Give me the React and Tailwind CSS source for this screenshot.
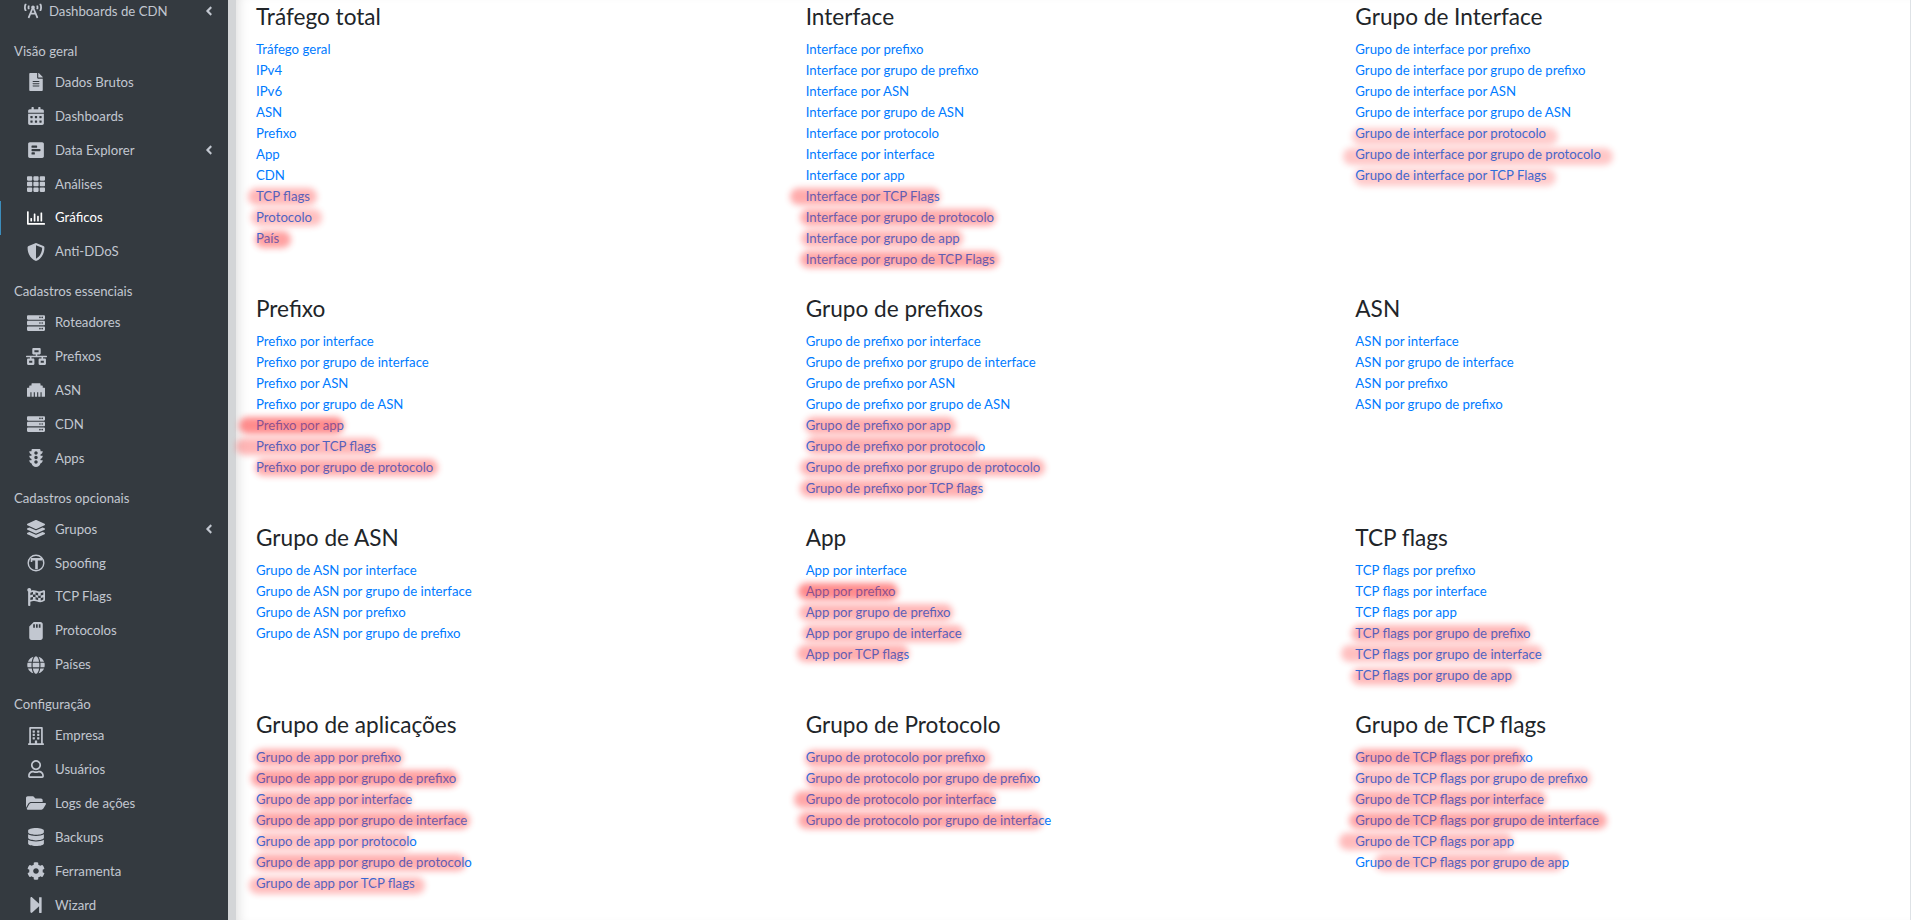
import {
  FaBroadcastTower, FaFileAlt, FaCalendarAlt, FaPollH, FaTh, FaRegChartBar, FaShieldAlt, FaServer,
  FaNetworkWired, FaEthernet, FaTrafficLight, FaLayerGroup, FaFlagCheckered, FaSdCard, FaGlobe,
  FaRegBuilding, FaRegUser, FaFolderOpen, FaDatabase, FaCog, FaStepForward, FaAngleLeft,
} from 'react-icons/fa';

function SpoofIcon({ size }) {
  return (
    <svg width={size} height={size} viewBox="0 0 18 18" fill="none" stroke="currentColor">
      <circle cx="9" cy="9" r="7.8" strokeWidth="1.4" />
      <path d="M4 5.2h11M9.5 5.2v10" strokeWidth="2.6" />
      <path d="M4.5 5v3" strokeWidth="1.6" />
    </svg>
  );
}

const menu = [
  { section: 'Visão geral', items: [
    { icon: FaFileAlt, label: 'Dados Brutos' },
    { icon: FaCalendarAlt, label: 'Dashboards' },
    { icon: FaPollH, label: 'Data Explorer', arrow: true },
    { icon: FaTh, label: 'Análises' },
    { icon: FaRegChartBar, label: 'Gráficos', active: true },
    { icon: FaShieldAlt, label: 'Anti-DDoS' },
  ] },
  { section: 'Cadastros essenciais', items: [
    { icon: FaServer, label: 'Roteadores' },
    { icon: FaNetworkWired, label: 'Prefixos', size: 21 },
    { icon: FaEthernet, label: 'ASN' },
    { icon: FaServer, label: 'CDN' },
    { icon: FaTrafficLight, label: 'Apps' },
  ] },
  { section: 'Cadastros opcionais', items: [
    { icon: FaLayerGroup, label: 'Grupos', arrow: true },
    { icon: SpoofIcon, label: 'Spoofing' },
    { icon: FaFlagCheckered, label: 'TCP Flags' },
    { icon: FaSdCard, label: 'Protocolos' },
    { icon: FaGlobe, label: 'Países' },
  ] },
  { section: 'Configuração', items: [
    { icon: FaRegBuilding, label: 'Empresa' },
    { icon: FaRegUser, label: 'Usuários' },
    { icon: FaFolderOpen, label: 'Logs de ações', size: 20 },
    { icon: FaDatabase, label: 'Backups' },
    { icon: FaCog, label: 'Ferramenta' },
    { icon: FaStepForward, label: 'Wizard' },
  ] },
];

// m: [overhang left, overhang right, opacity, y shift] of the red marker stroke
const groups = [
  { title: 'Tráfego total', links: [
    ['Tráfego geral'], ['IPv4'], ['IPv6'], ['ASN'], ['Prefixo'], ['App'], ['CDN'],
    ['TCP flags', [8, 7, 0.35, 0]], ['Protocolo', [5, 10, 0.3, 0]], ['País', [1, 12, 0.45, 1]],
  ] },
  { title: 'Interface', links: [
    ['Interface por prefixo'], ['Interface por grupo de prefixo'], ['Interface por ASN'], ['Interface por grupo de ASN'],
    ['Interface por protocolo'], ['Interface por interface'], ['Interface por app'],
    ['Interface por TCP Flags', [16, 0, 0.4, 0]], ['Interface por grupo de protocolo', [6, 2, 0.4, 0]],
    ['Interface por grupo de app', [5, 3, 0.35, 0]], ['Interface por grupo de TCP Flags', [6, 4, 0.42, 0]],
  ] },
  { title: 'Grupo de Interface', links: [
    ['Grupo de interface por prefixo'], ['Grupo de interface por grupo de prefixo'], ['Grupo de interface por ASN'], ['Grupo de interface por grupo de ASN'],
    ['Grupo de interface por protocolo', [3, 12, 0.25, 3]], ['Grupo de interface por grupo de protocolo', [12, 12, 0.27, 2]],
    ['Grupo de interface por TCP Flags', [1, 9, 0.25, 2]],
  ] },
  { title: 'Prefixo', links: [
    ['Prefixo por interface'], ['Prefixo por grupo de interface'], ['Prefixo por ASN'], ['Prefixo por grupo de ASN'],
    ['Prefixo por app', [17, 0, 0.55, 0]], ['Prefixo por TCP flags', [20, 3, 0.35, 0]], ['Prefixo por grupo de protocolo', [1, 5, 0.4, 0]],
  ] },
  { title: 'Grupo de prefixos', links: [
    ['Grupo de prefixo por interface'], ['Grupo de prefixo por grupo de interface'], ['Grupo de prefixo por ASN'], ['Grupo de prefixo por grupo de ASN'],
    ['Grupo de prefixo por app', [1, 5, 0.38, 0]], ['Grupo de prefixo por protocolo', [0, -5, 0.38, -1]],
    ['Grupo de prefixo por grupo de protocolo', [6, 5, 0.36, 0]], ['Grupo de prefixo por TCP flags', [6, 0, 0.38, 0]],
  ] },
  { title: 'ASN', links: [
    ['ASN por interface'], ['ASN por grupo de interface'], ['ASN por prefixo'], ['ASN por grupo de prefixo'],
  ] },
  { title: 'Grupo de ASN', links: [
    ['Grupo de ASN por interface'], ['Grupo de ASN por grupo de interface'], ['Grupo de ASN por prefixo'], ['Grupo de ASN por grupo de prefixo'],
  ] },
  { title: 'App', links: [
    ['App por interface'], ['App por prefixo', [8, 2, 0.55, 0]], ['App por grupo de prefixo', [7, 2, 0.35, 0]],
    ['App por grupo de interface', [4, 2, 0.35, 0]], ['App por TCP flags', [9, 0, 0.38, -1]],
  ] },
  { title: 'TCP flags', links: [
    ['TCP flags por prefixo'], ['TCP flags por interface'], ['TCP flags por app'],
    ['TCP flags por grupo de prefixo', [4, 0, 0.35, 0]], ['TCP flags por grupo de interface', [14, 1, 0.3, -1]],
    ['TCP flags por grupo de app', [4, 4, 0.33, 1]],
  ] },
  { title: 'Grupo de aplicações', links: [
    ['Grupo de app por prefixo', [2, 2, 0.4, 0]], ['Grupo de app por grupo de prefixo', [5, 2, 0.45, 0]],
    ['Grupo de app por interface', [0, -1, 0.38, 1]], ['Grupo de app por grupo de interface', [2, 3, 0.42, 0]],
    ['Grupo de app por protocolo', [0, -6, 0.3, 0]], ['Grupo de app por grupo de protocolo', [2, -6, 0.38, 0]],
    ['Grupo de app por TCP flags', [7, 10, 0.32, 2]],
  ] },
  { title: 'Grupo de Protocolo', links: [
    ['Grupo de protocolo por prefixo', [1, 5, 0.38, 1]], ['Grupo de protocolo por grupo de prefixo', [0, -3, 0.38, 1]],
    ['Grupo de protocolo por interface', [12, 0, 0.42, 0]], ['Grupo de protocolo por grupo de interface', [8, -8, 0.42, 0]],
  ] },
  { title: 'Grupo de TCP flags', links: [
    ['Grupo de TCP flags por prefixo', [1, -8, 0.42, 0]], ['Grupo de TCP flags por grupo de prefixo', [1, 3, 0.3, 0]],
    ['Grupo de TCP flags por interface', [4, 2, 0.38, 0]], ['Grupo de TCP flags por grupo de interface', [6, 8, 0.42, 0]],
    ['Grupo de TCP flags por app', [16, -1, 0.32, 0]], ['Grupo de TCP flags por grupo de app', [-20, -5, 0.32, 0]],
  ] },
];

function SideItem({ item }) {
  const Icon = item.icon;
  return (
    <div className={`relative flex items-center h-[33.9px] ${item.active ? 'text-white' : 'text-[#c2c7d0]'}`}>
      {item.active && <div className="absolute left-0 top-0 h-full w-[1px] bg-[#3c8dbc]" />}
      <div className={`${item.compact ? 'w-[49px]' : 'w-[55px]'} pl-[17px] flex justify-center shrink-0`}>
        <Icon size={item.size || 18} />
      </div>
      <span className="flex-1">{item.label}</span>
      {item.arrow && <FaAngleLeft size={14} className="mr-[12px]" />}
    </div>
  );
}

function Marked({ text, m }) {
  return (
    <a className="relative inline-block text-[#007bff]" href="#">
      {text}
      {m && (
        <span
          className="absolute top-[2px] bottom-[2px] rounded-full bg-[#ff3030] blur-[3px]"
          style={{ left: -m[0], right: -m[1], opacity: m[2], transform: `translateY(${m[3]}px)` }}
        />
      )}
    </a>
  );
}

export default function App() {
  return (
    <div className="flex h-screen overflow-hidden bg-white text-[13.2px] leading-[21px] font-['Lato','Noto_Sans',sans-serif]">
      <aside className="w-[228px] shrink-0 bg-[#343a40]">
        <div className="-mt-[5.5px]">
          <SideItem item={{ icon: FaBroadcastTower, label: 'Dashboards de CDN', arrow: true, compact: true }} />
          {menu.map(g => (
            <div key={g.section} className="mt-[9px]">
              <div className="h-[28px] pl-[14px] flex items-center text-[#c2c7d0]">{g.section}</div>
              {g.items.map(i => <SideItem key={i.label} item={i} />)}
            </div>
          ))}
        </div>
      </aside>
      <div className="w-2 shrink-0 bg-[#d3d5d7]" />
      <main className="flex-1 mr-[2px] border-r border-[#dee2e6] pl-[20px] pr-[5px] pt-[1.5px] shadow-[inset_10px_0_12px_-8px_rgba(0,0,0,0.14)]">
        <div className="grid grid-cols-3 gap-y-6">
          {groups.map(g => (
            <section key={g.title}>
              <h3 className="text-[22.6px] leading-[29px] mb-2 text-[#212529]">{g.title}</h3>
              {g.links.map(([text, m]) => (
                <div key={text}><Marked text={text} m={m} /></div>
              ))}
            </section>
          ))}
        </div>
      </main>
    </div>
  );
}
